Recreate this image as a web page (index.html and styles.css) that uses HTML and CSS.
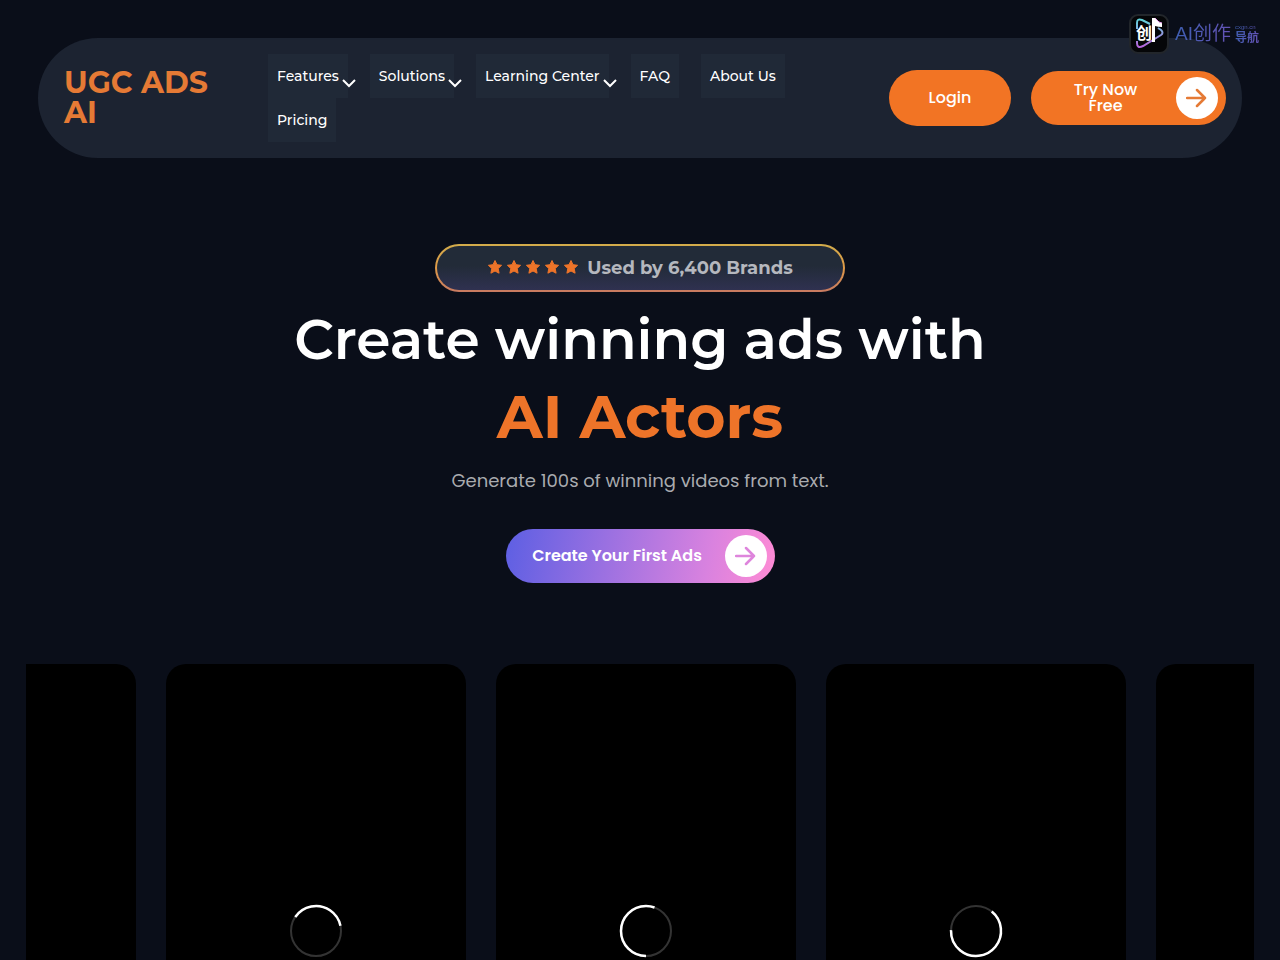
FILE: index.html
```
<!DOCTYPE html>
<html lang="en">
<head>
  <meta charset="utf-8">
  <meta name="viewport" content="width=device-width, initial-scale=1">
  <title>UGC ADS AI</title>
  <link rel="stylesheet" href="styles.css">
</head>
<body>
  <header class="header">
    <a href="#" class="logo">UGC ADS AI</a>
    <nav class="nav">
      <a href="#">Features<svg class="chevron" viewBox="0 0 14 9"><path d="M1 1l6 6 6-6"/></svg></a>
      <a href="#">Solutions<svg class="chevron" viewBox="0 0 14 9"><path d="M1 1l6 6 6-6"/></svg></a>
      <a href="#">Learning Center<svg class="chevron" viewBox="0 0 14 9"><path d="M1 1l6 6 6-6"/></svg></a>
      <a href="#">FAQ</a>
      <a href="#">About Us</a>
      <a href="#">Pricing</a>
    </nav>
    <div class="actions">
      <a href="#" class="btn btn-login">Login</a>
      <a href="#" class="btn btn-try">
        <span class="label">Try Now Free</span>
        <span class="circle"><svg viewBox="0 0 22 22"><path d="M1 11h18M11 3l8 8-8 8"/></svg></span>
      </a>
    </div>
  </header>

  <!-- site badge -->
  <div class="mark">
    <svg class="mark-icon" viewBox="0 0 40 40">
      <defs>
        <linearGradient id="play" x1="0" y1="0" x2="0" y2="1">
          <stop offset="0" stop-color="#62d5dc"/>
          <stop offset="1" stop-color="#b765dc"/>
        </linearGradient>
      </defs>
      <rect x="1" y="1" width="38" height="38" rx="8" fill="#050608" stroke="#22262b" stroke-width="2"/>
      <path d="M8 15V9q0-5 5-3l8 4M29 14l3 2q3 3 0 5L14 32q-6 3-6-3v-2" fill="none" stroke="url(#play)" stroke-width="2"/>
      <text x="7" y="25" class="mark-char">创</text>
      <path d="M23 28V4h3l4 4 3 1v4q-4 0-7-1v16z" fill="#fff"/>
      <path d="M26 4l4 4 3 1" fill="none" stroke="#e49be8"/>
    </svg>
    <span class="mark-name">AI创作</span>
    <span class="mark-side"><small>cxgn.cn</small>导航</span>
  </div>

  <main>
    <section class="hero">
      <div class="badge">
        <span class="stars">
          <svg viewBox="0 0 16 16"><path d="M8 1.5l2 4.2 4.6.6-3.4 3.2.9 4.7L8 12l-4.1 2.2.9-4.7-3.4-3.2 4.6-.6z"/></svg>
          <svg viewBox="0 0 16 16"><path d="M8 1.5l2 4.2 4.6.6-3.4 3.2.9 4.7L8 12l-4.1 2.2.9-4.7-3.4-3.2 4.6-.6z"/></svg>
          <svg viewBox="0 0 16 16"><path d="M8 1.5l2 4.2 4.6.6-3.4 3.2.9 4.7L8 12l-4.1 2.2.9-4.7-3.4-3.2 4.6-.6z"/></svg>
          <svg viewBox="0 0 16 16"><path d="M8 1.5l2 4.2 4.6.6-3.4 3.2.9 4.7L8 12l-4.1 2.2.9-4.7-3.4-3.2 4.6-.6z"/></svg>
          <svg viewBox="0 0 16 16"><path d="M8 1.5l2 4.2 4.6.6-3.4 3.2.9 4.7L8 12l-4.1 2.2.9-4.7-3.4-3.2 4.6-.6z"/></svg>
        </span>
        <span>Used by 6,400 Brands</span>
      </div>
      <h1>Create winning ads with <strong>AI Actors</strong></h1>
      <p>Generate 100s of winning videos from text.</p>
      <a href="#" class="btn btn-create">
        <span class="label">Create Your First Ads</span>
        <span class="circle"><svg viewBox="0 0 22 22"><path d="M1 11h18M11 3l8 8-8 8"/></svg></span>
      </a>
    </section>

    <section class="slider">
      <div class="track">
        <div class="video"></div>
        <div class="video">
          <svg class="spinner" viewBox="0 0 52 52">
            <circle cx="26" cy="26" r="25"/>
            <circle class="arc" cx="26" cy="26" r="25" pathLength="360" stroke-dasharray="134 226" transform="rotate(-146 26 26)"/>
          </svg>
        </div>
        <div class="video">
          <svg class="spinner" viewBox="0 0 52 52">
            <circle cx="26" cy="26" r="25"/>
            <circle class="arc" cx="26" cy="26" r="25" pathLength="360" stroke-dasharray="200 160" transform="rotate(90 26 26)"/>
          </svg>
        </div>
        <div class="video">
          <svg class="spinner" viewBox="0 0 52 52">
            <circle cx="26" cy="26" r="25"/>
            <circle class="arc" cx="26" cy="26" r="25" pathLength="360" stroke-dasharray="233 127" transform="rotate(-51 26 26)"/>
          </svg>
        </div>
        <div class="video"></div>
      </div>
    </section>
  </main>
</body>
</html>
```
FILE: styles.css
```
* {
  box-sizing: border-box;
}
body {
  margin: 0;
  background: #0a0e19;
  color: #fff;
  font-family: Montserrat, Inter, "Liberation Sans", sans-serif;
}
a {
  color: inherit;
  text-decoration: none;
}

/* header */
.header {
  display: flex;
  align-items: center;
  margin: 38px 38px 0;
  padding: 16px 16px 16px 26px;
  background: #1c2331;
  border-radius: 60px;
}
.logo {
  flex: 0 0 164px;
  margin-right: 40px;
  color: #e57a35;
  font-size: 30px;
  font-weight: 700;
  line-height: 30px;
}
.nav {
  display: flex;
  flex: 1;
  flex-wrap: wrap;
  column-gap: 22px;
  padding-right: 20px;
}
.nav a {
  position: relative;
  padding: 0 9px;
  background: #202937;
  font-size: 14px;
  font-weight: 500;
  line-height: 44px;
}
.chevron {
  position: absolute;
  top: 25px;
  right: -8px;
  width: 14px;
  height: 9px;
  fill: none;
  stroke: #fff;
  stroke-width: 2;
}
.actions {
  display: flex;
  align-items: center;
  gap: 20px;
  margin-left: 20px;
}
.btn {
  display: inline-flex;
  align-items: center;
  border-radius: 28px;
  background: #f27424;
  font-family: Poppins, Inter, "Liberation Sans", sans-serif;
  font-size: 16px;
  font-weight: 500;
  line-height: 16px;
}
.btn-login {
  justify-content: center;
  width: 122px;
  height: 56px;
}
.btn-try {
  width: 195px;
  padding: 6px 8px 6px 24px;
}
.label {
  flex: 1;
  text-align: center;
}
.btn-try .label {
  padding: 0 16px;
}
.circle {
  display: flex;
  align-items: center;
  justify-content: center;
  width: 42px;
  height: 42px;
  margin-left: 20px;
  border-radius: 50%;
  background: #fff;
}
.circle svg {
  width: 22px;
  height: 22px;
  fill: none;
  stroke: #e57a35;
  stroke-width: 2.5;
  stroke-linecap: round;
  stroke-linejoin: round;
}

/* site badge */
.mark {
  position: absolute;
  top: 14px;
  right: 21px;
  display: flex;
  align-items: center;
  gap: 4px;
  font-family: "Liberation Sans", "Noto Sans CJK SC", sans-serif;
}
.mark-icon {
  width: 40px;
  height: 40px;
}
.mark-char {
  fill: #fff;
  font-size: 16px;
  font-weight: 700;
}
.mark-name,
.mark-side {
  background: linear-gradient(100deg, #3c5eb0, #6652b5);
  background-clip: text;
  -webkit-background-clip: text;
  color: transparent;
}
.mark-name {
  margin-left: 2px;
  font-size: 19px;
  line-height: 26px;
}
.mark-side {
  font-size: 12px;
  font-weight: 700;
  line-height: 14px;
}
.mark-side small {
  display: block;
  font-size: 6px;
  font-weight: 400;
  line-height: 8px;
}

/* hero */
.hero {
  display: flex;
  flex-direction: column;
  align-items: center;
  padding: 86px 20px 81px;
  text-align: center;
}
.badge {
  display: flex;
  align-items: center;
  justify-content: center;
  gap: 8px;
  width: 410px;
  height: 48px;
  border: 2px solid transparent;
  border-radius: 24px;
  background:
    linear-gradient(#222b38 45%, #2f3150) padding-box,
    linear-gradient(#d2ac4b, #df9a48 50%, #c87a61) border-box;
  color: #b5b8be;
  font-size: 18px;
  font-weight: 700;
}
.stars {
  display: flex;
  gap: 3px;
  margin-bottom: 3px;
}
.stars svg {
  width: 16px;
  height: 16px;
  fill: #ee7429;
  stroke: #ee7429;
  stroke-linejoin: round;
}
h1 {
  margin: 9px 0 0;
  font-size: 55px;
  font-weight: 600;
  line-height: 77px;
}
h1 strong {
  display: block;
  color: #ee7429;
  font-size: 60px;
  font-weight: 700;
}
.hero p {
  margin: 12px 0 34px;
  color: #a9abaf;
  font-family: Poppins, Inter, "Liberation Sans", sans-serif;
  font-size: 18px;
  line-height: 28px;
}
.btn-create {
  min-width: 269px;
  padding: 6px 8px 6px 24px;
  background: linear-gradient(100deg, #5d5fe3, #d982df 75%, #ff8bd4);
  font-weight: 600;
}
.btn-create .circle svg {
  stroke: #de85dc;
}

/* videos */
.slider {
  margin: 0 26px;
  overflow: hidden;
}
.track {
  display: flex;
  gap: 30px;
  margin-left: -190px;
}
.video {
  display: flex;
  flex: 0 0 300px;
  align-items: center;
  justify-content: center;
  aspect-ratio: 9 / 16;
  border-radius: 20px;
  background: #000;
}
.spinner {
  width: 52px;
  height: 52px;
  overflow: visible;
  fill: none;
  stroke: #333;
  stroke-width: 2;
}
.spinner .arc {
  stroke: #fff;
  stroke-width: 2.5;
}
```
